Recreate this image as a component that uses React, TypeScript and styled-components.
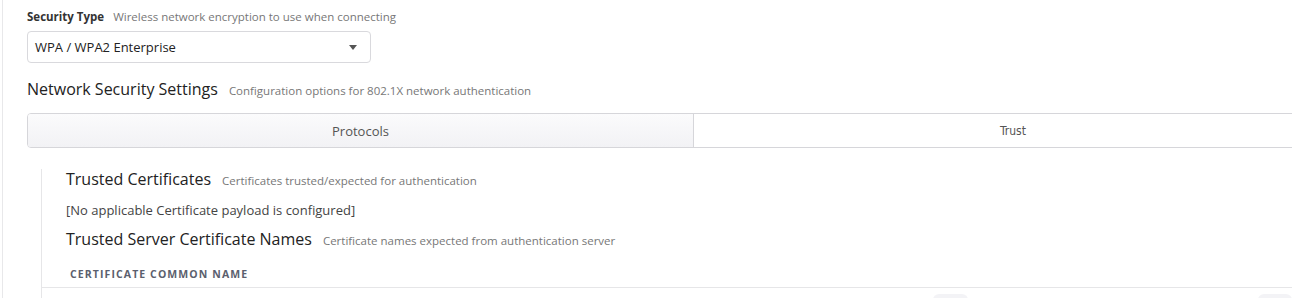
import React from 'react'
import styled, { createGlobalStyle } from 'styled-components'

const GlobalStyle = createGlobalStyle`
  html, body {
    margin: 0;
    padding: 0;
    background: #fff;
    overflow: hidden;
  }
  body {
    font-family: 'Open Sans', Lato, sans-serif;
    color: #333;
  }
`

const Page = styled.div`
  height: 298px;
  margin-left: 2px;
  border-left: 1px solid #e8e8ea;
  padding: 10px 0 0 24px;
  box-sizing: border-box;
  overflow: hidden;
`

const FieldHeader = styled.div`
  display: flex;
  align-items: baseline;
  gap: 9px;
  height: 14px;
  line-height: 14px;
`

const FieldLabel = styled.span`
  font-size: 11.5px;
  font-weight: 700;
  color: #333;
`

const Hint = styled.span`
  font-size: 11.5px;
  color: #777;
`

const Select = styled.div`
  margin-top: 7px;
  width: 344px;
  height: 32px;
  box-sizing: border-box;
  border: 1px solid #d9d9dd;
  border-radius: 4px;
  display: flex;
  align-items: center;
  justify-content: space-between;
  padding: 0 13px 0 7px;
  font-size: 13px;
  color: #222;
`

const Caret = styled.span`
  width: 0;
  height: 0;
  border-left: 4px solid transparent;
  border-right: 4px solid transparent;
  border-top: 5px solid #555;
`

const SectionHeader = styled.div<{ $top: number }>`
  display: flex;
  align-items: baseline;
  gap: 11px;
  height: 20px;
  line-height: 20px;
  margin-top: ${(p) => p.$top}px;
`

const SectionTitle = styled.span`
  font-size: 16px;
  color: #222;
`

const Tabs = styled.div`
  margin-top: 14px;
  display: flex;
  width: 1306px;
  height: 35px;
  box-sizing: border-box;
  border: 1px solid #d6d6da;
  border-radius: 4px;
  overflow: hidden;
`

const Tab = styled.div<{ $active?: boolean }>`
  flex: ${(p) => (p.$active ? '0 0 665px' : '1 1 auto')};
  display: flex;
  align-items: center;
  justify-content: center;
  color: #555;
  background: ${(p) => (p.$active ? 'linear-gradient(#fbfbfc, #f2f2f5)' : '#fff')};
  border-right: ${(p) => (p.$active ? '1px solid #d6d6da' : 'none')};
`

const TabLabel = styled.span<{ $alt?: boolean }>`
  font-family: ${(p) => (p.$alt ? "'DejaVu Sans Condensed', 'Liberation Sans Narrow', sans-serif" : 'inherit')};
  font-size: ${(p) => (p.$alt ? '12px' : '13px')};
`

const TrustPanel = styled.div`
  margin-top: 21px;
  margin-left: 14px;
  border-left: 1px solid #e6e6e8;
  padding-left: 24px;
  height: 200px;
`

const Note = styled.div`
  margin-top: 13px;
  height: 16px;
  line-height: 16px;
  font-size: 13px;
  color: #444;
`

const TableHead = styled.div`
  margin-top: 19px;
  margin-left: -24px;
  padding: 0 0 7px 28px;
  height: 12px;
  line-height: 12px;
  border-bottom: 1px solid #e6e6e8;
  font-size: 10.5px;
  font-weight: 700;
  letter-spacing: 1.1px;
  color: #5b5f6e;
  width: 1300px;
`

const Ghosts = styled.div`
  display: flex;
  margin-top: 6px;
  margin-left: 867px;
  gap: 290px;
`

const Ghost = styled.div`
  width: 42px;
  height: 12px;
  border-radius: 6px;
  background: #f3f3f6;
`

export default function App() {
  return (
    <>
      <GlobalStyle />
      <Page>
        <FieldHeader>
          <FieldLabel>Security Type</FieldLabel>
          <Hint>Wireless network encryption to use when connecting</Hint>
        </FieldHeader>
        <Select>
          <span>WPA / WPA2 Enterprise</span>
          <Caret />
        </Select>
        <SectionHeader $top={16}>
          <SectionTitle>Network Security Settings</SectionTitle>
          <Hint>Configuration options for 802.1X network authentication</Hint>
        </SectionHeader>
        <Tabs>
          <Tab $active>
            <TabLabel>Protocols</TabLabel>
          </Tab>
          <Tab>
            <TabLabel $alt>Trust</TabLabel>
          </Tab>
        </Tabs>
        <TrustPanel>
          <SectionHeader $top={0}>
            <SectionTitle>Trusted Certificates</SectionTitle>
            <Hint>Certificates trusted/expected for authentication</Hint>
          </SectionHeader>
          <Note>[No applicable Certificate payload is configured]</Note>
          <SectionHeader $top={11}>
            <SectionTitle>Trusted Server Certificate Names</SectionTitle>
            <Hint>Certificate names expected from authentication server</Hint>
          </SectionHeader>
          <TableHead>CERTIFICATE COMMON NAME</TableHead>
          <Ghosts>
            <Ghost />
            <Ghost />
          </Ghosts>
        </TrustPanel>
      </Page>
    </>
  )
}
